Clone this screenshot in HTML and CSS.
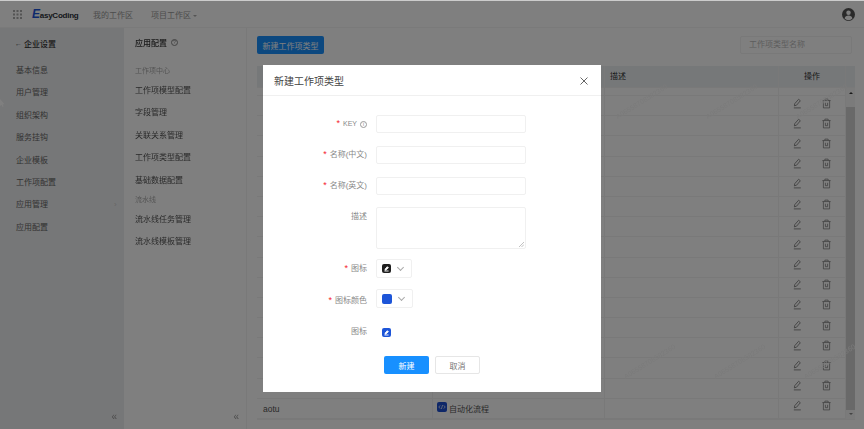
FILE: index.html
```html
<!DOCTYPE html>
<html lang="zh-CN">
<head>
<meta charset="utf-8">
<title>新建工作项类型</title>
<link rel="stylesheet" href="styles.css">
</head>
<body>
<svg class="defs" width="0" height="0" aria-hidden="true">
  <symbol id="edit" viewBox="0 0 12 12"><path d="M2.600 8.600 3 6.200 7.200 1.400l1.900 1.600L5 7.800l-2.400.8ZM2 10.800h7.600" fill="none" stroke="currentColor" stroke-width=".9"/></symbol>
  <symbol id="trash" viewBox="0 0 12 12"><path d="M1.500 2.800h9M4.200 2.600V1.200h3.600v1.400M2.600 2.800v8h6.800v-8M4.800 5.200v3.200h2.400V5.200" fill="none" stroke="currentColor" stroke-width=".8"/></symbol>
</svg>
<div class="app">
  <header class="topbar">
    <svg class="grid-icon" viewBox="0 0 9 9" width="9" height="9"><g fill="#aaa"><rect width="2" height="2"/><rect x="3.500" width="2" height="2"/><rect x="7" width="2" height="2"/><rect y="3.500" width="2" height="2"/><rect x="3.500" y="3.500" width="2" height="2"/><rect x="7" y="3.500" width="2" height="2"/><rect y="7" width="2" height="2"/><rect x="3.500" y="7" width="2" height="2"/><rect x="7" y="7" width="2" height="2"/></g></svg>
    <div class="logo"><span class="logo-e">E</span>asyCoding</div>
    <a class="top-link first">我的工作区</a>
    <a class="top-link second">项目工作区<span class="caret"></span></a>
    <svg class="avatar" viewBox="0 0 14 14" width="13" height="13"><circle cx="7" cy="7" r="7" fill="#555"/><circle cx="7" cy="5.200" r="2.400" fill="#fff"/><path d="M2.800 11.400c.5-2.400 2.200-3.200 4.200-3.200s3.700.8 4.200 3.200A6 6 0 0 1 2.800 11.400Z" fill="#fff"/></svg>
  </header>
  <div class="body">
    <aside class="side-one">
      <div class="side-head"><span class="back">←</span><strong>企业设置</strong></div>
      <nav class="nav-one">
        <a>基本信息</a><a>用户管理</a><a>组织架构</a><a>服务挂钩</a><a>企业模板</a><a>工作项配置</a>
        <a class="has-arrow">应用管理<span class="arrow">›</span></a><a>应用配置</a>
      </nav>
      <span class="collapse">«</span>
    </aside>
    <aside class="side-two">
      <div class="side-title"><strong>应用配置</strong><span class="help">?</span></div>
      <div class="group-label">工作项中心</div>
      <nav class="nav-two"><a>工作项模型配置</a><a>字段管理</a><a>关联关系管理</a><a>工作项类型配置</a><a>基础数据配置</a></nav>
      <div class="group-label tight">流水线</div>
      <nav class="nav-two"><a>流水线任务管理</a><a>流水线模板管理</a></nav>
      <span class="collapse">«</span>
    </aside>
    <main class="content">
      <div class="toolbar">
        <button class="btn-new">新建工作项类型</button>
        <div class="search">工作项类型名称</div>
      </div>
      <div class="table">
        <div class="thead">
          <div class="c1"></div><div class="c2"></div><div class="c3">描述</div><div class="c4">操作</div><div class="c5"></div>
        </div>
        <div class="tbody">
          <div class="rows">
            <div class="spacer"><div class="c1"></div><div class="c2"></div><div class="c3"></div><div class="c4"></div></div>
            <div class="row"><div class="c1"></div><div class="c2"></div><div class="c3"></div><div class="c4"><svg class="ico"><use href="#edit"/></svg><svg class="ico"><use href="#trash"/></svg></div></div>
            <div class="row"><div class="c1"></div><div class="c2"></div><div class="c3"></div><div class="c4"><svg class="ico"><use href="#edit"/></svg><svg class="ico"><use href="#trash"/></svg></div></div>
            <div class="row"><div class="c1"></div><div class="c2"></div><div class="c3"></div><div class="c4"><svg class="ico"><use href="#edit"/></svg><svg class="ico"><use href="#trash"/></svg></div></div>
            <div class="row"><div class="c1"></div><div class="c2"></div><div class="c3"></div><div class="c4"><svg class="ico"><use href="#edit"/></svg><svg class="ico"><use href="#trash"/></svg></div></div>
            <div class="row"><div class="c1"></div><div class="c2"></div><div class="c3"></div><div class="c4"><svg class="ico"><use href="#edit"/></svg><svg class="ico"><use href="#trash"/></svg></div></div>
            <div class="row"><div class="c1"></div><div class="c2"></div><div class="c3"></div><div class="c4"><svg class="ico"><use href="#edit"/></svg><svg class="ico"><use href="#trash"/></svg></div></div>
            <div class="row"><div class="c1"></div><div class="c2"></div><div class="c3"></div><div class="c4"><svg class="ico"><use href="#edit"/></svg><svg class="ico"><use href="#trash"/></svg></div></div>
            <div class="row"><div class="c1"></div><div class="c2"></div><div class="c3"></div><div class="c4"><svg class="ico"><use href="#edit"/></svg><svg class="ico"><use href="#trash"/></svg></div></div>
            <div class="row"><div class="c1"></div><div class="c2"></div><div class="c3"></div><div class="c4"><svg class="ico"><use href="#edit"/></svg><svg class="ico"><use href="#trash"/></svg></div></div>
            <div class="row"><div class="c1"></div><div class="c2"></div><div class="c3"></div><div class="c4"><svg class="ico"><use href="#edit"/></svg><svg class="ico"><use href="#trash"/></svg></div></div>
            <div class="row"><div class="c1"></div><div class="c2"></div><div class="c3"></div><div class="c4"><svg class="ico"><use href="#edit"/></svg><svg class="ico"><use href="#trash"/></svg></div></div>
            <div class="row"><div class="c1"></div><div class="c2"></div><div class="c3"></div><div class="c4"><svg class="ico"><use href="#edit"/></svg><svg class="ico"><use href="#trash"/></svg></div></div>
            <div class="row"><div class="c1"></div><div class="c2"></div><div class="c3"></div><div class="c4"><svg class="ico"><use href="#edit"/></svg><svg class="ico"><use href="#trash"/></svg></div></div>
            <div class="row"><div class="c1"></div><div class="c2"></div><div class="c3"></div><div class="c4"><svg class="ico"><use href="#edit"/></svg><svg class="ico"><use href="#trash"/></svg></div></div>
            <div class="row"><div class="c1"></div><div class="c2"></div><div class="c3"></div><div class="c4"><svg class="ico"><use href="#edit"/></svg><svg class="ico"><use href="#trash"/></svg></div></div>
            <div class="row"><div class="c1 name">aotu</div><div class="c2 type"><svg class="type-icon" viewBox="0 0 10 10" width="10" height="10"><rect width="10" height="10" rx="2" fill="#1d4fd1"/><path d="M3.200 3.400 1.800 5l1.400 1.600M6.800 3.400 8.200 5 6.800 6.600M5.600 3 4.400 7" fill="none" stroke="#fff" stroke-width=".7"/></svg>自动化流程</div><div class="c3"></div><div class="c4"><svg class="ico"><use href="#edit"/></svg><svg class="ico"><use href="#trash"/></svg></div></div>
          </div>
          <div class="scrollbar"><span class="sb-up"></span><span class="sb-thumb"></span><span class="sb-down"></span></div>
        </div>
      </div>
    </main>
  </div>
</div>
<div class="watermarks" aria-hidden="true">
  <span class="wm w1">A06558708582360</span><span class="wm w2">A06558708582360</span><span class="wm w3">A06558708582360</span>
  <span class="wm w4">A06558708582360</span><span class="wm w5">A06558708582360</span><span class="wm w6">A06558708582360</span>
</div>
<svg class="pointer" viewBox="0 0 5 8" width="5" height="8"><path d="M0 0v7l1.500-1.300L2.600 8l1-.5-1-2.200h1.900Z" fill="#fff"/></svg>
<div class="overlay">
  <section class="modal">
    <header class="modal-head">
      <h2>新建工作项类型</h2>
      <svg class="close" viewBox="0 0 8 8" width="8" height="8"><path d="M.5.5l7 7M7.500.5l-7 7" stroke="#555" stroke-width=".9" fill="none"/></svg>
    </header>
    <form class="form">
      <label class="lbl req"><span class="key">KEY</span><span class="info">i</span></label><div class="input"></div>
      <label class="lbl req">名称(中文)</label><div class="input"></div>
      <label class="lbl req">名称(英文)</label><div class="input"></div>
      <label class="lbl desc">描述</label>
      <div class="textarea"><svg class="grip" viewBox="0 0 5 5" width="5" height="5"><path d="M5 0 0 5M5 2.500 2.500 5" stroke="#999" stroke-width=".6"/></svg></div>
      <label class="lbl req mid">图标</label>
      <div class="select s1"><span class="swatch black"><svg viewBox="0 0 9 9" width="9" height="9"><path d="M3 6.200 3.300 4.800 5.400 2.700 6.400 3.700 4.300 5.800ZM2.400 7h4.200" stroke="#fff" stroke-width=".9" fill="#fff"/></svg></span><span class="chev"></span></div>
      <label class="lbl req mid">图标颜色</label>
      <div class="select s2"><span class="swatch blue"></span><span class="chev"></span></div>
      <label class="lbl mid">图标</label>
      <div class="preview"><span class="swatch small"><svg viewBox="0 0 9 9" width="9" height="9"><path d="M3 6.200 3.300 4.800 5.400 2.700 6.400 3.700 4.300 5.800ZM2.400 7h4.200" stroke="#fff" stroke-width=".9" fill="#fff"/></svg></span></div>
    </form>
    <div class="actions"><button class="primary">新建</button><button class="ghost">取消</button></div>
  </section>
</div>
</body>
</html>
```
FILE: styles.css
```css
* { box-sizing: border-box; }
html, body { margin: 0; height: 100%; overflow: hidden; }
body { background: #ccc; font-family: "Liberation Sans", "Noto Sans CJK SC", sans-serif; font-size: 8px; color: #666; position: relative; filter: blur(.35px); }
.defs { position: absolute; }
.app { display: flex; flex-direction: column; height: 429px; padding-top: 1px; }
.topbar { height: 27px; flex: none; background: #fff; border-bottom: 1px solid #f4f4f4; display: flex; align-items: center; padding: 0 9px 0 13px; font-size: 8px; }
.grid-icon { flex: none; }
.logo { margin-left: 10px; font: 700 8px "Liberation Sans", sans-serif; letter-spacing: -.25px; color: #2b3038; width: 47px; white-space: nowrap; }
.logo-e { color: #1d55d8; font-style: italic; font-weight: 700; font-size: 12px; }
.top-link { color: #999; white-space: nowrap; }
.first { margin-left: 14px; }
.second { margin-left: 18px; }
.caret { display: inline-block; margin-left: 2px; border: 2px solid transparent; border-top: 2.500px solid #aaa; border-bottom: 0; vertical-align: 1px; }
.avatar { margin-left: auto; }
.body { flex: 1; display: flex; min-height: 0; }
.side-one { width: 124px; flex: none; background: #edeef0; position: relative; padding: 9px 0 0 15px; }
.side-head { height: 13px; display: flex; align-items: center; gap: 2px; color: #444; }
.side-head strong { font-weight: 500; color: #333; font-size: 8px; }
.back { color: #555; font-size: 7px; }
.nav-one { display: flex; flex-direction: column; margin: 10px 0 0 1px; }
.nav-one a { height: 22.400px; line-height: 22.400px; color: #666; display: flex; }
.arrow { margin-left: 66px; color: #ccc; }
.collapse { position: absolute; right: 7px; bottom: 7px; color: #999; font-size: 10px; line-height: 10px; }
.side-two { width: 123px; flex: none; background: #fff; border-right: 1px solid #f2f2f2; position: relative; padding: 8px 0 0 11px; }
.side-title { display: flex; align-items: center; gap: 4px; height: 12px; }
.side-title strong { font-weight: 500; color: #333; }
.help { width: 7px; height: 7px; border: 1px solid #888; border-radius: 50%; font-size: 5px; line-height: 5px; text-align: center; color: #888; }
.group-label { font-size: 7px; color: #aaa; margin-top: 18px; line-height: 10px; }
.group-label.tight { margin-top: 3px; }
.nav-two { display: flex; flex-direction: column; margin-top: 4px; }
.nav-two a { height: 22.400px; line-height: 22.400px; color: #555; }
.content { flex: 1; min-width: 0; background: #fff; padding: 8px 9px 0 10px; }
.toolbar { display: flex; justify-content: space-between; height: 18px; padding-right: 3px; margin-bottom: 12px; }
.btn-new { width: 67px; height: 18px; border: 0; border-radius: 2px; background: #1890ff; color: #fff; font: 8px "Liberation Sans", "Noto Sans CJK SC", sans-serif; padding: 0; }
.search { width: 112px; height: 18px; border: 1px solid #f2f2f2; border-radius: 2px; line-height: 16px; padding-left: 8px; color: #bbb; }
.table { border-bottom: 1px solid #f2f2f2; }
.thead { display: flex; height: 22px; background: #edf0f2; border-bottom: 1px solid #f2f2f2; color: #333; line-height: 21px; }
.c1 { width: 175px; flex: none; height: 100%; }
.c2 { width: 172px; flex: none; height: 100%; border-left: 1px solid #f2f2f2; }
.c3 { width: 174px; flex: none; height: 100%; border-left: 1px solid #f2f2f2; padding-left: 5px; }
.c4 { width: 67px; flex: none; height: 100%; border-left: 1px solid #f2f2f2; text-align: center; }
.c5 { flex: 1; border-left: 1px solid #f2f2f2; }
.tbody { display: flex; height: 331px; overflow: hidden; }
.rows { width: 588px; flex: none; }
.spacer { display: flex; height: 8px; border-bottom: 1px solid #f2f2f2; }
.row { display: flex; height: 20.200px; border-bottom: 1px solid #f2f2f2; }
.row .c4 { display: flex; align-items: center; justify-content: space-between; padding: 0 13px 5px 13px; }
.ico { width: 11px; height: 11px; color: #777; flex: none; }
.name { padding-left: 6px; line-height: 20px; font-size: 8.500px; color: #555; }
.type { display: flex; align-items: center; gap: 2px; padding-left: 4px; color: #555; }
.type-icon { flex: none; margin-bottom: 2px; }
.scrollbar { width: 10px; flex: none; background: #f6f6f6; display: flex; flex-direction: column; align-items: center; border-left: 1px solid #f2f2f2; }
.sb-up { margin-top: 4px; border: 2.500px solid transparent; border-bottom: 2.500px solid #333; border-top: 0; }
.sb-down { margin-top: 3px; border: 2.500px solid transparent; border-top: 2.500px solid #888; border-bottom: 0; }
.sb-thumb { width: 9px; height: 303px; background: #d2d2d2; margin-top: 13px; }
.watermarks { position: absolute; inset: 0; pointer-events: none; }
.wm { position: absolute; font-size: 7px; color: #f5f5f5; transform: rotate(-32deg); white-space: nowrap; }
.w1 { left: 612px; top: 98px; }
.w2 { left: 702px; top: 98px; }
.w3 { left: 792px; top: 98px; }
.w4 { left: 620px; top: 358px; }
.w5 { left: 710px; top: 358px; }
.w6 { left: 800px; top: 358px; }
.pointer { position: absolute; left: 0; top: 99px; }
.overlay { position: absolute; inset: 1px 0 0 0; background: rgba(0, 0, 0, .5); display: flex; justify-content: center; align-items: flex-start; padding-top: 64px; }
.modal { width: 338px; height: 327px; background: #fff; display: flex; flex-direction: column; }
.modal-head { height: 31px; flex: none; border-bottom: 1px solid #f0f0f0; display: flex; align-items: center; justify-content: space-between; padding: 0 13px 0 11px; }
.modal-head h2 { margin: 0; font-size: 10px; font-weight: 400; color: #444; }
.close { margin-top: 2px; }
.form { display: grid; grid-template-columns: 104px 150px; column-gap: 9px; row-gap: 13px; padding-top: 19px; }
.lbl { text-align: right; color: #888; line-height: 16px; white-space: nowrap; }
.lbl.mid { line-height: 18px; }
.desc { padding-top: 1px; }
.req::before { content: "*"; color: #f5222d; margin-right: 3px; font-size: 9px; }
.key { font-size: 7px; }
.info { display: inline-block; width: 7px; height: 7px; border: 1px solid #999; border-radius: 50%; font-size: 5px; line-height: 5px; text-align: center; margin-left: 3px; vertical-align: 0; }
.input { height: 18px; border: 1px solid #f0f0f0; border-radius: 2px; }
.textarea { height: 42px; border: 1px solid #f0f0f0; border-radius: 2px; position: relative; margin-top: -1px; margin-bottom: -3px; }
.grip { position: absolute; right: 1px; bottom: 1px; }
.select { height: 19px; border: 1px solid #f0f0f0; border-radius: 2px; display: flex; align-items: center; justify-content: space-between; padding: 0 6px 0 5px; }
.s1 { width: 36px; }
.s2 { width: 37px; margin-top: -2px; }
.swatch { width: 9px; height: 9px; border-radius: 2px; display: block; flex: none; }
.swatch svg { display: block; }
.black { background: #1f1f1f; }
.blue { width: 10px; height: 10px; background: #1d55d8; }
.small { background: #1d55d8; margin: 5px 0 0 6px; }
.chev { width: 5px; height: 5px; border-right: 1px solid #aaa; border-bottom: 1px solid #aaa; transform: rotate(45deg); margin: -3px 2px 0 0; }
.preview { height: 18px; }
.actions { display: flex; gap: 6px; margin-top: 15px; padding-left: 121px; }
.actions button { width: 45px; height: 18px; border-radius: 2px; font: 8px "Liberation Sans", "Noto Sans CJK SC", sans-serif; padding: 0; }
.primary { background: #1890ff; color: #fff; border: 0; }
.ghost { background: #fff; color: #777; border: 1px solid #e6e6e6; }
```
